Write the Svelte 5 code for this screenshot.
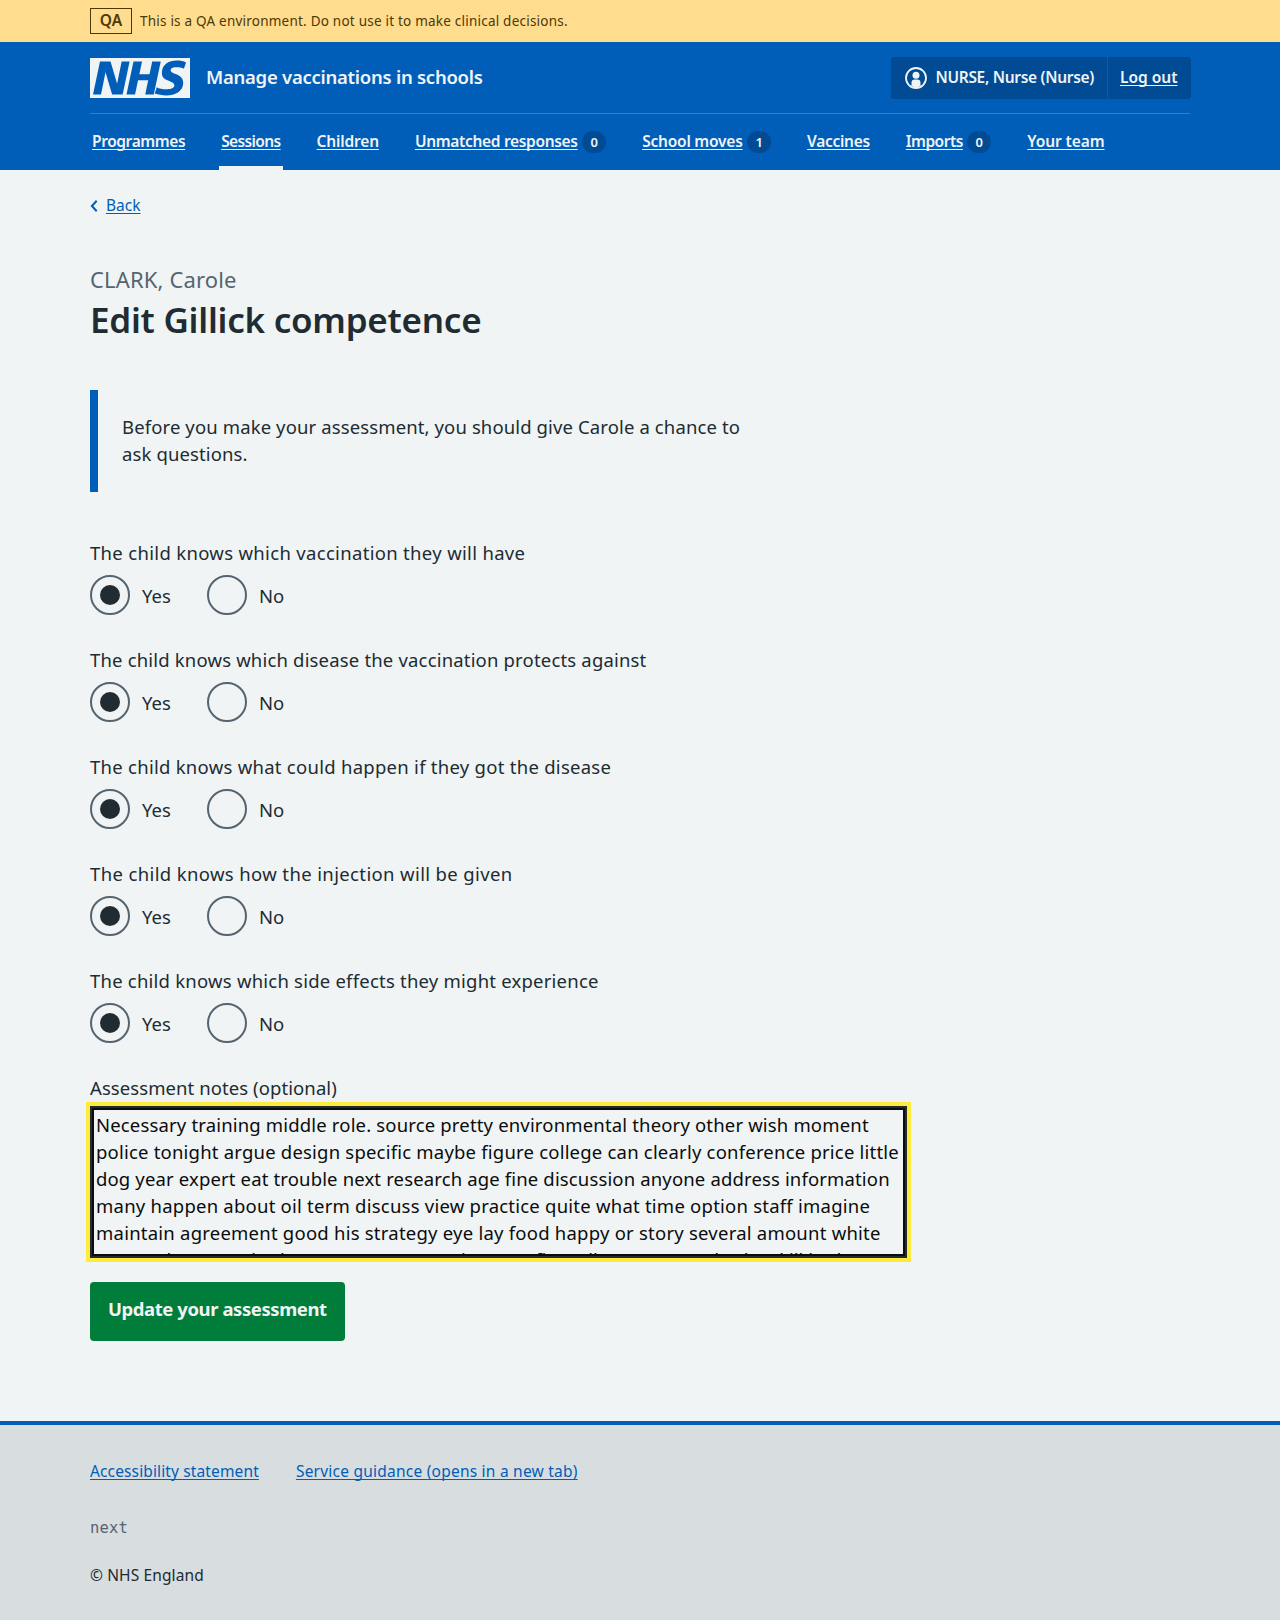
<script>
  const nav = [
    { label: 'Programmes', tracking: -0.4 },
    { label: 'Sessions', current: true, tracking: -0.62 },
    { label: 'Children', tracking: -0.16 },
    { label: 'Unmatched responses', count: 0, tracking: -0.32 },
    { label: 'School moves', count: 1, tracking: -0.22 },
    { label: 'Vaccines', tracking: -0.3 },
    { label: 'Imports', count: 0, tracking: -0.5 },
    { label: 'Your team', tracking: -0.1 }
  ];
  const questions = [
    { text: 'The child knows which vaccination they will have', tracking: 0.32 },
    { text: 'The child knows which disease the vaccination protects against', tracking: 0.175 },
    { text: 'The child knows what could happen if they got the disease', tracking: 0.27 },
    { text: 'The child knows how the injection will be given', tracking: 0.37 },
    { text: 'The child knows which side effects they might experience', tracking: 0.22 }
  ];
  const notes = [
    { text: 'Necessary training middle role. source pretty environmental theory other wish moment', tracking: 0.165 },
    { text: 'police tonight argue design specific maybe figure college can clearly conference price little', tracking: 0.205 },
    { text: 'dog year expert eat trouble next research age fine discussion anyone address information', tracking: 0.147 },
    { text: 'many happen about oil term discuss view practice quite what time option staff imagine', tracking: 0.23 },
    { text: 'maintain agreement good his strategy eye lay food happy or story several amount white', tracking: 0.23 },
    { text: 'remove her own size bear scene easy music owe a fire call on summer day be skill had', tracking: 0 }
  ];
</script>

<div class="env"><div class="wrap env-row">
  <strong class="tag">QA</strong><span>This is a QA environment. Do not use it to make clinical decisions.</span>
</div></div>

<header>
  <div class="wrap top">
    <svg class="logo" viewBox="0 0 200 80" aria-label="NHS"><path fill="#f0f4f5" d="M200 0v80H0V0h200Z" /><path fill="#005eb8" transform="translate(-2.800 0) scale(1.012 1)" d="M81 7 67.300 73H46.500L33.600 29h-.3L24.500 73H8.700L22.500 7h20.900l12.800 44.100h.2L65.300 7H81Zm61.600 0-13.800 66h-16.900l5.900-28.300H97.700L91.800 73H74.900L88.700 7h16.900l-5.300 25.300h20.100L125.700 7h16.900Zm49.900 1.900-4.100 12.500c-3.300-1.600-7.700-2.800-14-2.800-6.700 0-12.200 1-12.200 6.100 0 9 24.800 5.600 24.800 25C187 67.300 170.600 75 153.500 75c-7.600 0-16.400-1.800-22.800-3.800l4.100-12.800c3.900 2.600 11.700 4.300 18.700 4.300 6.300 0 16.100-1.200 16.100-8 0-10.600-24.800-6.600-24.800-24.200C144.800 12 159 5 173.600 5c7.300 0 14.600 1.200 18.900 3.900Z" /></svg>
    <span class="service">Manage vaccinations in schools</span>
    <div class="account">
      <div class="user">
        <svg class="person" viewBox="0 0 24 24"><circle cx="12" cy="12" r="10" fill="none" stroke="currentColor" stroke-width="1.800" /><circle cx="12" cy="9.300" r="3.500" fill="currentColor" /><path fill="currentColor" d="M7.500 20v-3.200a3.300 3.300 0 0 1 3.300-3.300h2.400a3.300 3.300 0 0 1 3.300 3.300V20L12 22Z" /></svg>
        <span class="name">NURSE, Nurse (Nurse)</span>
      </div>
      <div class="out"><a href="#out">Log out</a></div>
    </div>
  </div>
  <nav class="wrap">
    {#each nav as item}
      <div class="item" class:current={item.current}>
        <a href="#nav" style:letter-spacing="{item.tracking}px">{item.label}</a>{#if item.count !== undefined}<span class="count">{item.count}</span>{/if}
      </div>
    {/each}
  </nav>
</header>

<main class="wrap">
  <div class="back">
    <svg viewBox="0 0 8 14"><path d="M6.700 1.800 1.900 7l4.800 5.200" fill="none" stroke="#005eb8" stroke-width="2" /></svg>
    <a href="#back">Back</a>
  </div>
  <div class="caption">CLARK, Carole</div>
  <h1>Edit Gillick competence</h1>
  <div class="inset">Before you make your assessment, you should give Carole a chance to<br />ask questions.</div>
  {#each questions as question}
    <fieldset>
      <legend style:letter-spacing="{question.tracking}px">{question.text}</legend>
      <div class="radios">
        <span class="radio on"></span><span class="yes">Yes</span>
        <span class="radio"></span><span>No</span>
      </div>
    </fieldset>
  {/each}
  <div class="label">Assessment notes (optional)</div>
  <div class="notes">{#each notes as line}<div style:letter-spacing="{line.tracking}px">{line.text}</div>{/each}</div>
  <button>Update your assessment</button>
</main>

<footer>
  <div class="wrap">
    <div class="links"><a href="#a11y">Accessibility statement</a><a class="guide" href="#guide">Service guidance (opens in a new tab)</a></div>
    <div class="version">next</div>
    <div class="copy">© NHS England</div>
  </div>
</footer>

<style>
  :global(body) {
    background: #f0f4f5;
    color: #212b32;
    font: 18.500px/27px 'Noto Sans', sans-serif;
  }
  .wrap { width: 1100px; margin: 0 auto; }
  a { color: #005eb8; text-decoration: underline; text-decoration-thickness: 1px; text-underline-offset: 1.500px; text-decoration-skip-ink: none; white-space: nowrap; }
  .env { background: #ffdc8e; color: #4d3906; height: 42px; }
  .env-row { display: flex; align-items: center; height: 42px; gap: 8px; font-size: 13.500px; letter-spacing: 0.22px; white-space: nowrap; }
  .tag { box-sizing: border-box; width: 42px; height: 26px; border: 1px solid #4d3906; font-weight: 600; font-size: 15.500px; line-height: 23px; letter-spacing: 0.2px; text-align: center; }
  header { background: #005eb8; color: #f0f4f5; height: 128px; }
  header a { color: inherit; }
  .top { display: flex; align-items: center; height: 71px; border-bottom: 1px solid #337ec6; }
  .logo { width: 100px; height: 40px; }
  .service { margin-left: 16px; padding-bottom: 2px; font-size: 18.500px; font-weight: 600; letter-spacing: -0.26px; white-space: nowrap; }
  .account { display: flex; margin-left: auto; margin-right: -1px; width: 300px; height: 42px; border-radius: 3px; background: #004b93; font-size: 15.500px; font-weight: 600; letter-spacing: -0.31px; }
  .user { box-sizing: border-box; display: flex; align-items: center; width: 217px; padding-left: 13px; border-right: 1px solid #005eb8; white-space: nowrap; }
  .person { width: 24px; height: 24px; margin-right: 7.500px; }
  .out { display: flex; align-items: center; padding-left: 12px; letter-spacing: 0; }
  nav { display: flex; gap: 32px; height: 56px; font-size: 15.500px; font-weight: 600; }
  .item { box-sizing: border-box; display: flex; align-items: center; height: 56px; padding: 0 2px; }
  .item a { padding-bottom: 2px; }
  .current { border-bottom: 4px solid #f0f4f5; padding-top: 4px; }
  .count { width: 24px; height: 22px; margin-left: 4.500px; border-radius: 11px; background: #004b93; text-align: center; font-size: 13px; line-height: 22px; }
  .back { display: flex; align-items: center; height: 24px; margin-top: 24px; font-size: 15.500px; }
  .back svg { width: 8px; height: 14px; margin-right: 8px; }
  .back a { padding-bottom: 2px; }
  .caption { margin-top: 45px; font-size: 22px; line-height: 32px; letter-spacing: 0.15px; color: #566470; }
  h1 { margin: 1px 0 0; font-size: 35px; line-height: 48px; font-weight: 600; letter-spacing: -0.25px; white-space: nowrap; }
  .inset { box-sizing: border-box; height: 102px; margin: 46px 0 48px; border-left: 8px solid #005eb8; padding: 23px 24px; letter-spacing: 0.12px; white-space: nowrap; }
  fieldset { margin: 0 0 32px; border: 0; padding: 0; height: 75px; white-space: nowrap; }
  legend { padding: 0; height: 27px; line-height: 25px; }
  .radios { display: flex; align-items: center; height: 40px; margin-top: 8px; }
  .radio { box-sizing: border-box; display: grid; place-items: center; width: 40px; height: 40px; margin-right: 12px; border: 2px solid #566470; border-radius: 50%; }
  .on::after { content: ''; width: 20px; height: 20px; border-radius: 50%; background: #212b32; }
  .yes { width: 65px; }
  .label { height: 27px; line-height: 25px; letter-spacing: 0.08px; }
  .notes { box-sizing: border-box; width: 817px; height: 152px; margin-top: 4px; border: 2px solid #212b32; box-shadow: inset 0 0 0 2px #0b0c0c, 0 0 0 4px #ffeb3b; padding: 3px 4px; overflow: hidden; color: #0b0c0c; white-space: nowrap; }
  button { display: block; width: 254.500px; height: 59px; margin-top: 24px; border: 0; border-radius: 4px; padding: 0 0 6px; background: #007d3a; color: #f0f4f5; font: 700 18.500px/27px 'Noto Sans', sans-serif; letter-spacing: -0.42px; white-space: nowrap; }
  footer { height: 195px; margin-top: 80px; border-top: 4px solid #005eb8; background: #d8dde0; font-size: 15.500px; line-height: 24px; }
  .links { display: flex; gap: 37px; padding-top: 34px; letter-spacing: 0.13px; }
  .guide { letter-spacing: 0.23px; }
  .version { margin-top: 33px; font-family: 'DejaVu Sans Mono', monospace; letter-spacing: 0.2px; color: #566470; }
  .copy { margin-top: 23px; letter-spacing: 0.12px; }
</style>
